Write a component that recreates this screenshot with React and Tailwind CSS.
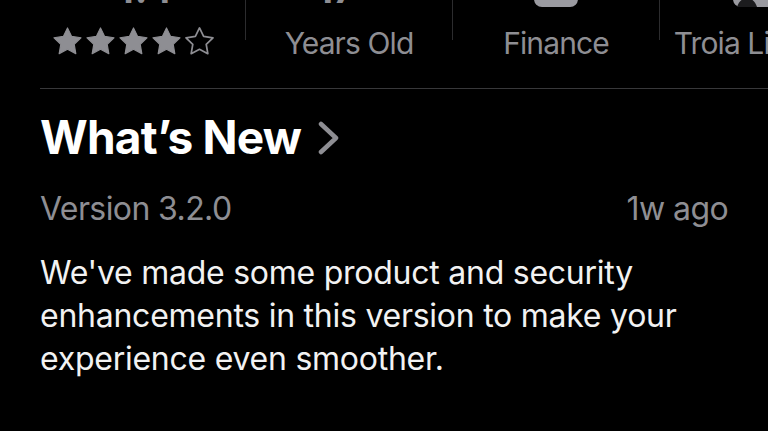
import React from "react";

const Star = ({ filled }) => (
  <svg width="29" height="28" viewBox="2 2 20 19.2" className="shrink-0">
    <path
      d="M12 2.6l2.85 5.85 6.45.92-4.66 4.55 1.1 6.42L12 17.3l-5.74 3.04 1.1-6.42L2.7 9.37l6.45-.92z"
      fill={filled ? "#8e8e93" : "none"}
      stroke="#8e8e93"
      strokeWidth={filled ? 0.8 : 1.2}
      strokeLinejoin="round"
    />
  </svg>
);

const Divider = () => <div className="w-px h-[40px] bg-[#2c2c2e] shrink-0" />;

export default function App() {
  return (
    <div className="w-[768px] h-[431px] bg-black overflow-hidden font-['Inter',sans-serif] antialiased">
      {/* info row (scrolled, top cut off) */}
      <div className="flex items-start pl-[38px] h-[88px] overflow-hidden">
        <div className="w-[207px] shrink-0 flex flex-col items-center -mt-[40px]">
          <div className="h-[48px] flex items-end text-[38px] leading-none font-bold text-[#8e8e93] tracking-[-0.5px]">
            4.4
          </div>
          <div className="mt-[19px] flex gap-[4px] pr-[17px]">
            <Star filled />
            <Star filled />
            <Star filled />
            <Star filled />
            <Star />
          </div>
        </div>
        <Divider />
        <div className="w-[206px] shrink-0 flex flex-col items-center -mt-[40px]">
          <div className="h-[48px] flex items-end text-[38px] leading-none font-bold text-[#8e8e93]">
            17+
          </div>
          <div className="mt-[15px] text-[30px] leading-[40px] text-[#8e8e93] tracking-[-0.9px]">
            Years Old
          </div>
        </div>
        <Divider />
        <div className="w-[206px] shrink-0 flex flex-col items-center -mt-[40px]">
          <div className="h-[48px] flex items-end">
            <svg width="46" height="36" viewBox="0 0 46 36">
              <rect x="1" y="0" width="44" height="35" rx="8" fill="#9a9aa0" />
            </svg>
          </div>
          <div className="mt-[15px] text-[30px] leading-[40px] text-[#8e8e93] tracking-[-0.9px]">
            Finance
          </div>
        </div>
        <Divider />
        <div className="w-[206px] shrink-0 flex flex-col items-center -mt-[40px]">
          <div className="h-[48px] flex items-end">
            <svg width="60" height="36" viewBox="0 0 60 36">
              <rect x="0" y="0" width="60" height="35" rx="8" fill="#9a9aa0" />
              <path d="M4 35c2-6 6-9 10-9s8 3 10 9z" fill="#1c1c1e" />
            </svg>
          </div>
          <div className="mt-[15px] pr-[8px] text-[30px] leading-[40px] text-[#8e8e93] tracking-[-0.9px] whitespace-nowrap">
            Troia Limited
          </div>
        </div>
      </div>

      <div className="ml-[40px] h-px bg-[#38383a]" />

      <div className="px-[40px]">
        <div className="mt-[20px] flex items-center gap-[17px]">
          <h2 className="text-[46px] leading-[56px] font-bold text-white tracking-[-0.8px]">
            What’s New
          </h2>
          <svg width="22" height="34" viewBox="0 0 22 34" className="mt-[2px]">
            <polyline
              points="3,3 18,17 3,31"
              fill="none"
              stroke="#8e8e93"
              strokeWidth="4.5"
              strokeLinecap="round"
              strokeLinejoin="round"
            />
          </svg>
        </div>
        <div className="mt-[24px] flex justify-between text-[32px] leading-[40px] text-[#8e8e93] tracking-[-0.6px]">
          <span>Version 3.2.0</span>
          <span>1w ago</span>
        </div>
        <p className="mt-[22px] text-[32px] leading-[43px] text-[#f2f2f2] tracking-[-0.25px]">
          We've made some product and security enhancements in this version to make your
          experience even smoother.
        </p>
      </div>
    </div>
  );
}
